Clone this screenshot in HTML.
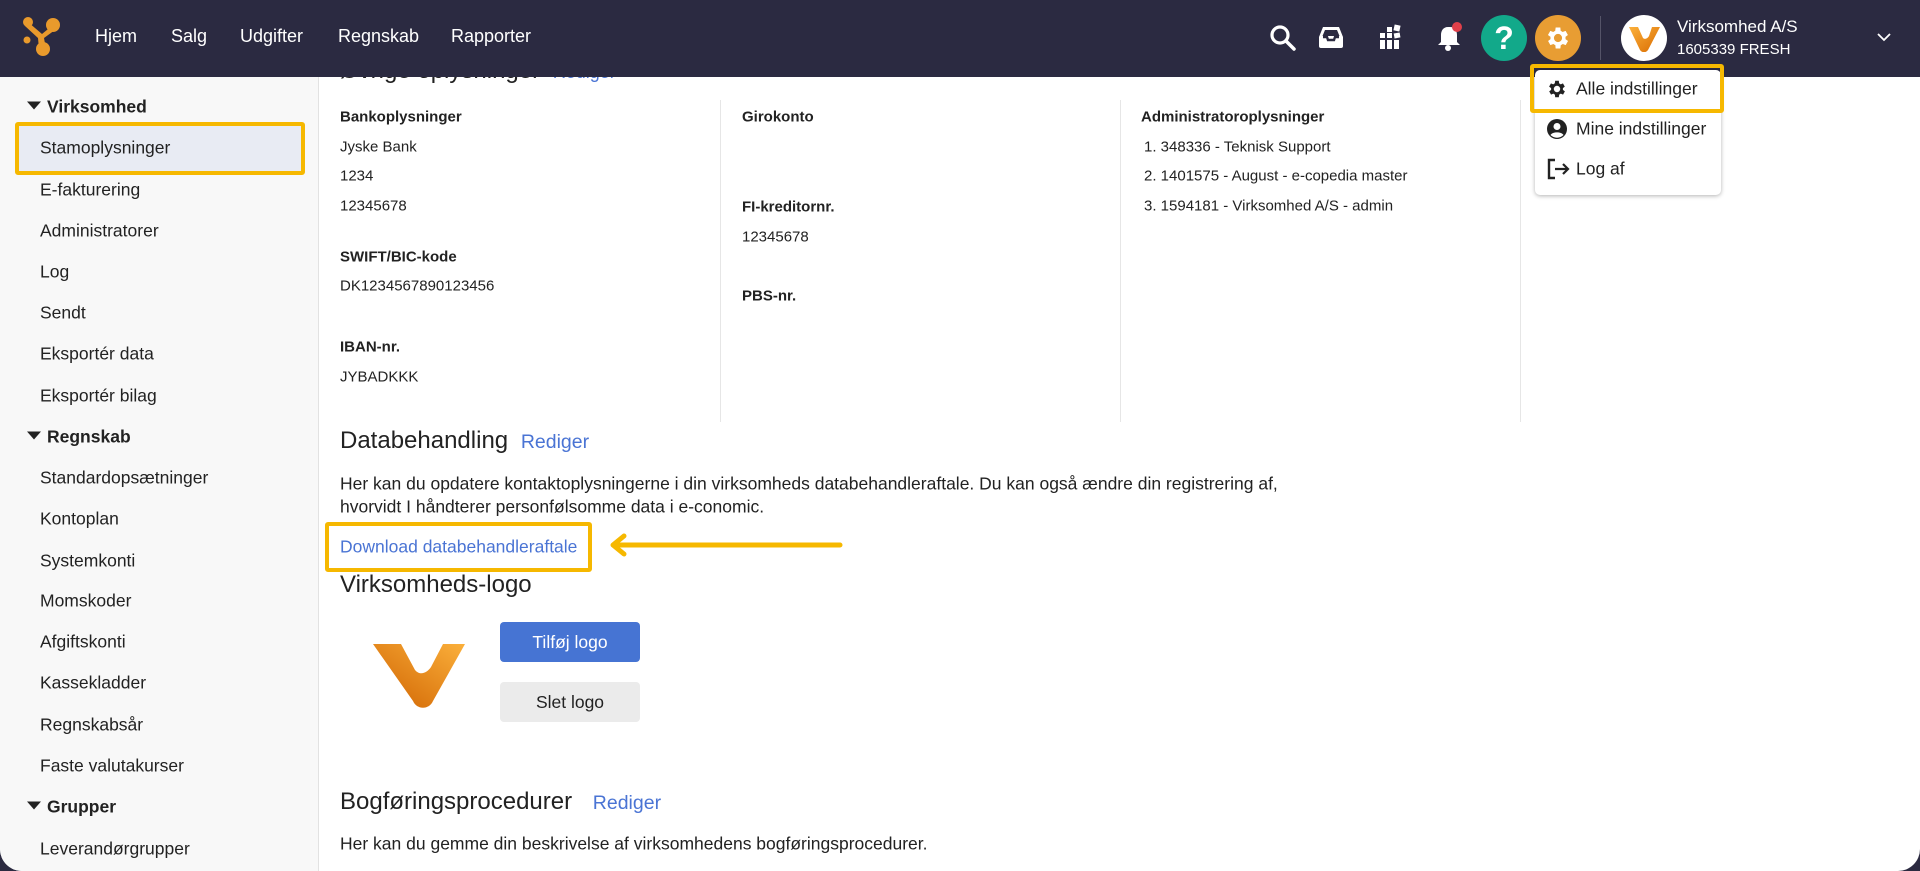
<!DOCTYPE html>
<html><head><meta charset="utf-8"><style>
*{margin:0;padding:0;box-sizing:border-box}
html,body{width:1920px;height:871px;overflow:hidden;background:#2b2a40;font-family:"Liberation Sans",Arial,sans-serif;color:#222}
.win{position:absolute;left:0;top:0;width:1920px;height:871px;background:#fff;border-radius:0 0 22px 22px;overflow:hidden}
.nav{position:absolute;left:0;top:0;width:1920px;height:77px;background:#2b2a41;z-index:5}
.nav .it{position:absolute;top:26px;color:#fff;font-size:18px}
.side{position:absolute;left:0;top:77px;width:319px;height:800px;background:#f8f8f8;border-right:1px solid #e2e2e2}
.s{position:absolute;left:40px;font-size:17.5px;color:#222;transform:translateY(-50%)}
.h{position:absolute;left:27px;font-size:17.5px;font-weight:bold;transform:translateY(-50%)}
.h:before{content:"";display:inline-block;border-left:7px solid transparent;border-right:7px solid transparent;border-top:8px solid #222;margin-right:6px;vertical-align:3px}
.t{position:absolute;transform:translateY(-50%);white-space:nowrap}
.lbl{font-size:15px;font-weight:bold}
.val{font-size:15px}
.hd{font-size:24px;color:#222}
.lnk{color:#4a74d4}
.p{font-size:17.5px}
.div{position:absolute;top:100px;width:1px;height:322px;background:#e6e6e6}
.hl{position:absolute;border:4px solid #f6b800;border-radius:3px}
.ic{position:absolute}
</style></head><body><div class="win">
<div class="nav">
<svg class="ic" style="left:22px;top:16px" width="40" height="42" viewBox="0 0 40 42"><g fill="#e99a2c"><circle cx="6" cy="6" r="5"/><circle cx="31" cy="9" r="7"/><circle cx="21" cy="33" r="7"/><circle cx="5" cy="24" r="3.5"/><path d="M6 6 L20 18 L31 9 L33 14 L22 22 L24 33 L17 33 L16 22 L3 10Z"/></g></svg>
<div class="it" style="left:95px">Hjem</div><div class="it" style="left:171px">Salg</div><div class="it" style="left:240px">Udgifter</div><div class="it" style="left:338px">Regnskab</div><div class="it" style="left:451px">Rapporter</div>
<svg class="ic" style="left:1269px;top:24px" width="28" height="28" viewBox="0 0 28 28"><circle cx="11" cy="11" r="8" stroke="#fff" stroke-width="3.2" fill="none"/><path d="M17 17 L25 25" stroke="#fff" stroke-width="3.5" stroke-linecap="round"/></svg>
<svg class="ic" style="left:1318px;top:25px" width="26" height="24" viewBox="0 0 26 24"><path d="M5 2h16l4 10v9a2 2 0 0 1-2 2H3a2 2 0 0 1-2-2v-9z" fill="#fff"/><path d="M5 12h4l1 3h6l1-3h4" stroke="#2b2a41" stroke-width="2.4" fill="none"/><path d="M7 5h12l2.5 6H4.5z" fill="#2b2a41"/></svg>
<svg class="ic" style="left:1380px;top:24px" width="22" height="26" viewBox="0 0 22 26"><g fill="#fff"><rect x="0" y="9" width="5" height="5"/><rect x="7" y="9" width="5" height="5"/><rect x="0" y="16" width="5" height="5"/><rect x="7" y="16" width="5" height="5"/><rect x="14" y="16" width="5" height="5"/><rect x="0" y="21" width="5" height="4"/><rect x="7" y="21" width="5" height="4"/><rect x="14" y="21" width="5" height="4"/><rect x="7" y="3" width="5" height="5"/><rect x="14" y="1" width="6" height="6" transform="rotate(12 17 4)"/><rect x="14" y="9" width="6" height="5" transform="rotate(-10 17 11)"/></g></svg>
<svg class="ic" style="left:1436px;top:21px" width="28" height="32" viewBox="0 0 28 32"><path d="M12 6c-5 0-7 4-7 8v7l-3 3h22l-3-3v-7c0-4-2-8-7-8z" fill="#fff"/><circle cx="12" cy="27" r="3" fill="#fff"/><circle cx="21" cy="6" r="5" fill="#e0404a"/></svg>
<div class="ic" style="left:1481px;top:15px;width:46px;height:46px;border-radius:50%;background:#12a98a;color:#fff;font-size:32px;font-weight:bold;text-align:center;line-height:46px">?</div>
<div class="ic" style="left:1535px;top:15px;width:46px;height:46px;border-radius:50%;background:#e89d33"></div>
<svg class="ic" style="left:1544px;top:24px" width="28" height="28" viewBox="0 0 24 24"><path fill="#fff" d="M19.4 13a7.5 7.5 0 0 0 0-2l2.1-1.6-2-3.5-2.5 1a7.6 7.6 0 0 0-1.7-1L15 3h-4l-.4 2.9a7.6 7.6 0 0 0-1.7 1l-2.5-1-2 3.5L6.6 11a7.5 7.5 0 0 0 0 2l-2.1 1.6 2 3.5 2.5-1a7.6 7.6 0 0 0 1.7 1L11 21h4l.4-2.9a7.6 7.6 0 0 0 1.7-1l2.5 1 2-3.5zM13 15.5a3.5 3.5 0 1 1 0-7 3.5 3.5 0 0 1 0 7z" transform="translate(-1 0)"/></svg>
<div class="ic" style="left:1600px;top:16px;width:1px;height:44px;background:#555468"></div>
<div class="ic" style="left:1621px;top:15px;width:46px;height:46px;border-radius:50%;background:#fff"></div>
<svg class="ic" style="left:1627px;top:26px" width="34" height="26" viewBox="0 0 34 26"><defs><linearGradient id="g1" x1="0" y1="0" x2="1" y2="1"><stop offset="0" stop-color="#fbb03b"/><stop offset="1" stop-color="#d96b00"/></linearGradient></defs><path d="M2 1h9l5 11c2 2 5 0 6-2L25 1h8L21 24c-2 3-6 3-8 0z" fill="url(#g1)"/></svg>
<div class="it" style="left:1677px;top:17px;font-size:17px">Virksomhed A/S</div>
<div class="it" style="left:1677px;top:41px;font-size:15px">1605339 FRESH</div>
<svg class="ic" style="left:1876px;top:31px" width="16" height="12" viewBox="0 0 16 12"><path d="M2 3l6 6 6-6" stroke="#fff" stroke-width="1.8" fill="none"/></svg>
</div>

<div class="side">
<div class="h" style="top:30px">Virksomhed</div>
<div style="position:absolute;left:19px;top:49px;width:282px;height:47px;background:#e8ebf3"></div>
<div class="hl" style="left:15px;top:45px;width:290px;height:53px"></div>
<div class="s" style="top:71px">Stamoplysninger</div>
<div class="s" style="top:113px">E-fakturering</div>
<div class="s" style="top:154px">Administratorer</div>
<div class="s" style="top:195px">Log</div>
<div class="s" style="top:236px">Sendt</div>
<div class="s" style="top:277px">Eksportér data</div>
<div class="s" style="top:319px">Eksportér bilag</div>
<div class="h" style="top:360px">Regnskab</div>
<div class="s" style="top:401px">Standardopsætninger</div>
<div class="s" style="top:442px">Kontoplan</div>
<div class="s" style="top:484px">Systemkonti</div>
<div class="s" style="top:524px">Momskoder</div>
<div class="s" style="top:565px">Afgiftskonti</div>
<div class="s" style="top:606px">Kassekladder</div>
<div class="s" style="top:648px">Regnskabsår</div>
<div class="s" style="top:689px">Faste valutakurser</div>
<div class="h" style="top:730px">Grupper</div>
<div class="s" style="top:772px">Leverandørgrupper</div>
</div>

<div class="t hd" style="left:340px;top:71px">Øvrige oplysninger <span class="lnk" style="font-size:18px;margin-left:6px">Rediger</span></div>
<div class="div" style="left:720px"></div><div class="div" style="left:1120px"></div><div class="div" style="left:1520px"></div>
<div class="t lbl" style="left:340px;top:117px">Bankoplysninger</div>
<div class="t val" style="left:340px;top:147px">Jyske Bank</div>
<div class="t val" style="left:340px;top:176px">1234</div>
<div class="t val" style="left:340px;top:206px">12345678</div>
<div class="t lbl" style="left:340px;top:257px">SWIFT/BIC-kode</div>
<div class="t val" style="left:340px;top:286px">DK1234567890123456</div>
<div class="t lbl" style="left:340px;top:347px">IBAN-nr.</div>
<div class="t val" style="left:340px;top:377px">JYBADKKK</div>
<div class="t lbl" style="left:742px;top:117px">Girokonto</div>
<div class="t lbl" style="left:742px;top:207px">FI-kreditornr.</div>
<div class="t val" style="left:742px;top:237px">12345678</div>
<div class="t lbl" style="left:742px;top:296px">PBS-nr.</div>
<div class="t lbl" style="left:1141px;top:117px">Administratoroplysninger</div>
<div class="t val" style="left:1144px;top:147px">1. 348336 - Teknisk Support</div>
<div class="t val" style="left:1144px;top:176px">2. 1401575 - August - e-copedia master</div>
<div class="t val" style="left:1144px;top:206px">3. 1594181 - Virksomhed A/S - admin</div>

<div class="t hd" style="left:340px;top:441px">Databehandling <span class="lnk" style="font-size:19.5px;margin-left:6px">Rediger</span></div>
<div class="t p" style="left:340px;top:484px">Her kan du opdatere kontaktoplysningerne i din virksomheds databehandleraftale. Du kan også ændre din registrering af,</div>
<div class="t p" style="left:340px;top:507px">hvorvidt I håndterer personfølsomme data i e-conomic.</div>
<div class="hl" style="left:325px;top:522px;width:267px;height:50px"></div>
<div class="t p lnk" style="left:340px;top:547px">Download databehandleraftale</div>
<svg class="ic" style="left:608px;top:532px" width="240" height="26" viewBox="0 0 240 26"><path d="M8 13H232" stroke="#f6b800" stroke-width="5" stroke-linecap="round"/><path d="M16 4L5 13l11 9" stroke="#f6b800" stroke-width="5" fill="none" stroke-linecap="round" stroke-linejoin="round"/></svg>

<div class="t hd" style="left:340px;top:585px">Virksomheds-logo</div>
<svg class="ic" style="left:373px;top:643px" width="92" height="66" viewBox="0 0 92 66"><defs><linearGradient id="g2" x1="1" y1="0" x2="0" y2="1"><stop offset="0" stop-color="#fbb03b"/><stop offset="1" stop-color="#cf6200"/></linearGradient></defs><path d="M0 1h28l14 26c5 6 12 3 16-3L70 1h22L60 58c-4 9-16 9-20 0z" fill="url(#g2)"/></svg>
<div class="ic" style="left:500px;top:622px;width:140px;height:40px;background:#4674d3;border-radius:4px;color:#fff;font-size:17.5px;text-align:center;line-height:40px">Tilføj logo</div>
<div class="ic" style="left:500px;top:682px;width:140px;height:40px;background:#ebebeb;border-radius:4px;color:#222;font-size:17.5px;text-align:center;line-height:40px">Slet logo</div>

<div class="t hd" style="left:340px;top:802px">Bogføringsprocedurer <span class="lnk" style="font-size:19.5px;margin-left:14px">Rediger</span></div>
<div class="t p" style="left:340px;top:844px">Her kan du gemme din beskrivelse af virksomhedens bogføringsprocedurer.</div>

<div class="ic" style="left:1535px;top:70px;width:186px;height:125px;background:#fff;border-radius:5px;box-shadow:0 1px 4px rgba(0,0,0,.3);z-index:6"></div>
<div class="hl" style="left:1530px;top:64px;width:194px;height:49px;z-index:7"></div>
<svg class="ic" style="left:1546px;top:78px;z-index:8" width="22" height="22" viewBox="0 0 24 24"><path fill="#222" d="M19.4 13a7.5 7.5 0 0 0 0-2l2.1-1.6-2-3.5-2.5 1a7.6 7.6 0 0 0-1.7-1L15 3h-4l-.4 2.9a7.6 7.6 0 0 0-1.7 1l-2.5-1-2 3.5L6.6 11a7.5 7.5 0 0 0 0 2l-2.1 1.6 2 3.5 2.5-1a7.6 7.6 0 0 0 1.7 1L11 21h4l.4-2.9a7.6 7.6 0 0 0 1.7-1l2.5 1 2-3.5zM13 15.5a3.5 3.5 0 1 1 0-7 3.5 3.5 0 0 1 0 7z" transform="translate(-1 0)"/></svg>
<div class="t" style="left:1576px;top:89px;font-size:17.5px;z-index:8">Alle indstillinger</div>
<svg class="ic" style="left:1546px;top:118px;z-index:8" width="22" height="22" viewBox="0 0 22 22"><circle cx="11" cy="11" r="10" fill="#222"/><circle cx="11" cy="8.5" r="3.5" fill="#fff"/><path d="M4.5 17c2-3.5 11-3.5 13 0a9 9 0 0 1-13 0z" fill="#fff"/></svg>
<div class="t" style="left:1576px;top:129px;font-size:17.5px;z-index:8">Mine indstillinger</div>
<svg class="ic" style="left:1547px;top:158px;z-index:8" width="24" height="22" viewBox="0 0 24 22"><path d="M8 2H2v18h6" stroke="#222" stroke-width="2.4" fill="none"/><path d="M8 11h13M16 6l5 5-5 5" stroke="#222" stroke-width="2.2" fill="none"/></svg>
<div class="t" style="left:1576px;top:169px;font-size:17.5px;z-index:8">Log af</div>
</div></body></html>
